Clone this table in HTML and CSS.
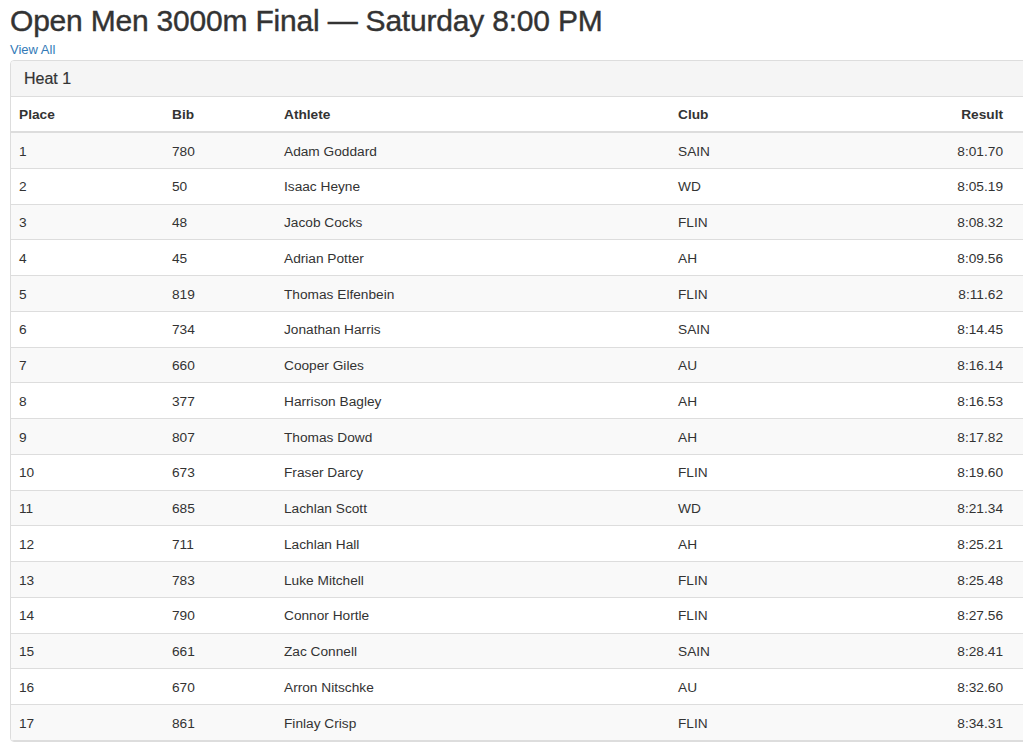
FILE: index.html
```html
<!DOCTYPE html>
<html lang="en">
<head>
<meta charset="utf-8">
<title>Open Men 3000m Final</title>
<link rel="stylesheet" href="styles.css">
</head>
<body>
<div class="page">
  <h1 class="title">Open Men 3000m Final — Saturday 8:00 PM</h1>
  <a class="view-all" href="#">View All</a>
  <div class="panel">
    <div class="panel-heading">Heat 1</div>
    <table class="results">
      <colgroup>
        <col class="c-place"><col class="c-bib"><col class="c-athlete"><col class="c-club"><col class="c-result">
      </colgroup>
      <thead>
        <tr><th>Place</th><th>Bib</th><th>Athlete</th><th>Club</th><th class="r">Result</th></tr>
      </thead>
      <tbody>
        <tr><td>1</td><td>780</td><td>Adam Goddard</td><td>SAIN</td><td class="r">8:01.70</td></tr>
        <tr><td>2</td><td>50</td><td>Isaac Heyne</td><td>WD</td><td class="r">8:05.19</td></tr>
        <tr><td>3</td><td>48</td><td>Jacob Cocks</td><td>FLIN</td><td class="r">8:08.32</td></tr>
        <tr><td>4</td><td>45</td><td>Adrian Potter</td><td>AH</td><td class="r">8:09.56</td></tr>
        <tr><td>5</td><td>819</td><td>Thomas Elfenbein</td><td>FLIN</td><td class="r">8:11.62</td></tr>
        <tr><td>6</td><td>734</td><td>Jonathan Harris</td><td>SAIN</td><td class="r">8:14.45</td></tr>
        <tr><td>7</td><td>660</td><td>Cooper Giles</td><td>AU</td><td class="r">8:16.14</td></tr>
        <tr><td>8</td><td>377</td><td>Harrison Bagley</td><td>AH</td><td class="r">8:16.53</td></tr>
        <tr><td>9</td><td>807</td><td>Thomas Dowd</td><td>AH</td><td class="r">8:17.82</td></tr>
        <tr><td>10</td><td>673</td><td>Fraser Darcy</td><td>FLIN</td><td class="r">8:19.60</td></tr>
        <tr><td>11</td><td>685</td><td>Lachlan Scott</td><td>WD</td><td class="r">8:21.34</td></tr>
        <tr><td>12</td><td>711</td><td>Lachlan Hall</td><td>AH</td><td class="r">8:25.21</td></tr>
        <tr><td>13</td><td>783</td><td>Luke Mitchell</td><td>FLIN</td><td class="r">8:25.48</td></tr>
        <tr><td>14</td><td>790</td><td>Connor Hortle</td><td>FLIN</td><td class="r">8:27.56</td></tr>
        <tr><td>15</td><td>661</td><td>Zac Connell</td><td>SAIN</td><td class="r">8:28.41</td></tr>
        <tr><td>16</td><td>670</td><td>Arron Nitschke</td><td>AU</td><td class="r">8:32.60</td></tr>
        <tr><td>17</td><td>861</td><td>Finlay Crisp</td><td>FLIN</td><td class="r">8:34.31</td></tr>
      </tbody>
    </table>
  </div>
</div>
</body>
</html>
```

FILE: styles.css
```css
html, body {
  margin: 0;
  padding: 0;
  overflow: hidden;
  background: #fff;
}
body {
  font-family: "Liberation Sans", Arial, Helvetica, sans-serif;
  color: #333;
  font-size: 13.7px;
}
.page {
  padding-left: 10px;
}
.title {
  margin: 4px 0 0;
  font-size: 30px;
  line-height: 33px;
  font-weight: normal;
  color: #333;
  white-space: nowrap;
  letter-spacing: -0.2px;
  -webkit-text-stroke: 0.4px #333;
}
.view-all {
  display: block;
  margin-top: 4px;
  font-size: 13px;
  line-height: 18.5px;
  color: #337ab7;
  text-decoration: none;
  width: max-content;
}
.panel {
  margin-top: 0.5px;
  width: 1030px;
  border: 1px solid #ddd;
  border-radius: 4px;
  background: #fff;
  overflow: hidden;
}
.panel-heading {
  background: #f5f5f5;
  border-bottom: 1px solid #ddd;
  padding: 10px 13px 9px;
  font-size: 16px;
  line-height: 16px;
  color: #333;
  -webkit-text-stroke: 0.2px #333;
}
.results {
  width: 100%;
  table-layout: fixed;
  border-collapse: separate;
  border-spacing: 0;
}
.c-place { width: 153px; }
.c-bib { width: 112px; }
.c-athlete { width: 394px; }
.c-club { width: 200px; }
.results th {
  text-align: left;
  font-weight: bold;
  padding: 9px 8px 7px;
  line-height: 18px;
  border-bottom: 2px solid #ddd;
}
.results td {
  padding: 9.5px 8px 6.5px;
  line-height: 18.75px;
  border-bottom: 1px solid #ddd;
}
.results tbody tr:nth-child(odd) td {
  background: #f9f9f9;
}
.results .r {
  text-align: right;
  padding-right: 38px;
}
```
